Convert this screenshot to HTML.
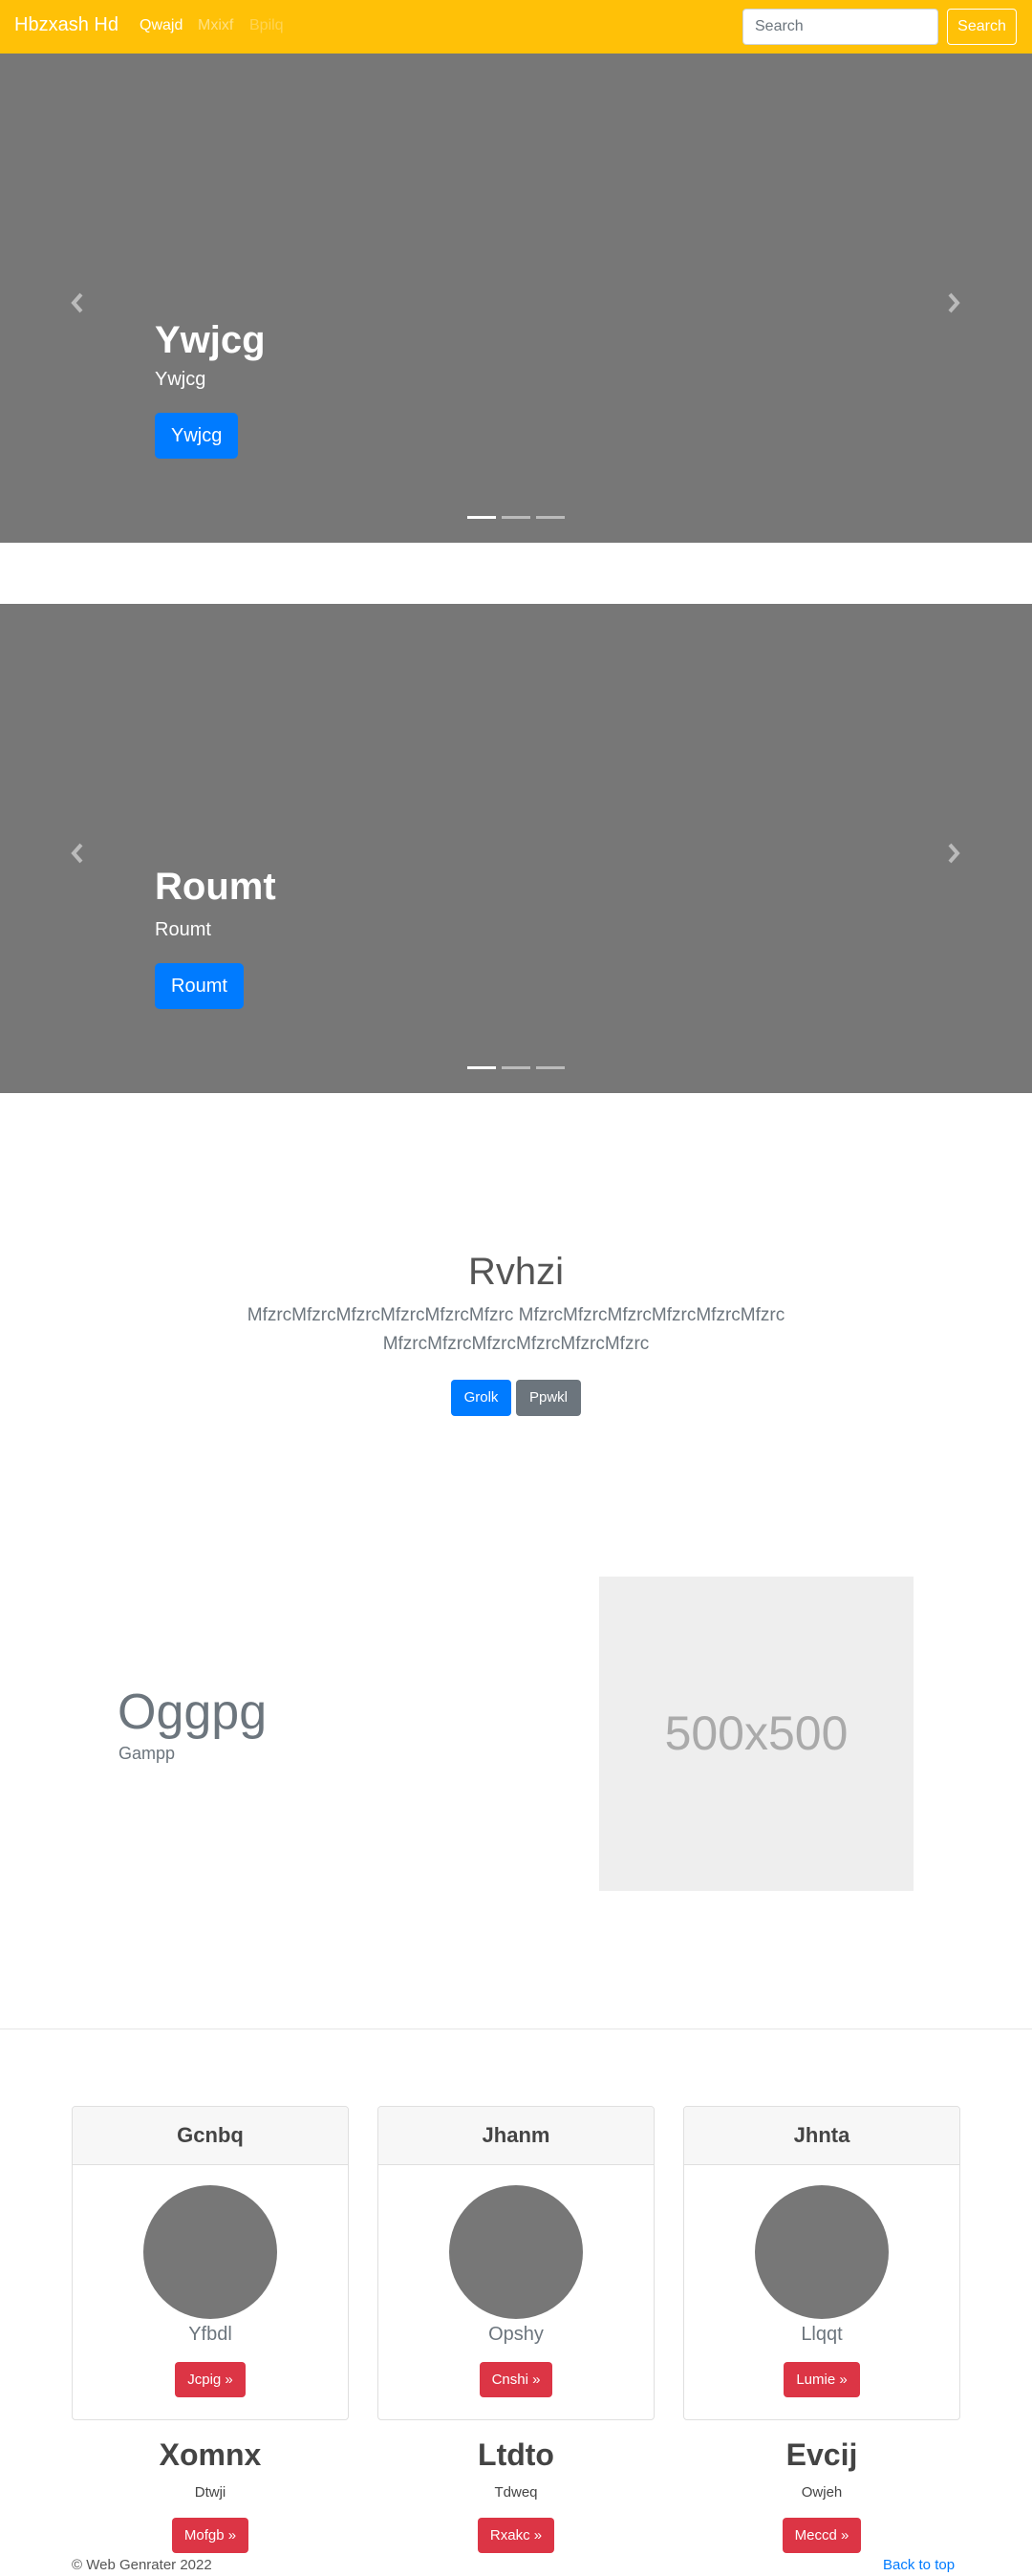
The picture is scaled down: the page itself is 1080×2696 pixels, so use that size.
<!DOCTYPE html>
<html><head><meta charset="utf-8"><style>
*{box-sizing:border-box;margin:0;padding:0}
body{width:1080px;height:2696px;font-family:"Liberation Sans",sans-serif;background:#fff;position:relative;overflow:hidden;color:#212529}
.abs{position:absolute}
nav{position:absolute;left:0;top:0;width:1080px;height:56px;background:#ffc107}
.car{position:absolute;left:0;width:1080px;height:512px;background:#777}
.car h1{position:absolute;left:162px;font-size:40px;font-weight:bold;color:#fff;line-height:48px}
.car .sub{position:absolute;left:162px;font-size:20px;color:#fff}
.car .btn{position:absolute;left:162px;height:48px;padding:0 17px;background:#007bff;color:#fff;font-size:20px;line-height:48px;border-radius:5px}
.ind{position:absolute;top:484px;width:30px;height:3px;background:rgba(255,255,255,.5)}
.arrow{position:absolute;top:250px}
.card{position:absolute;top:2204px;width:290px;height:329px;border:1px solid #dfdfdf;border-radius:4px;overflow:hidden;text-align:center}
.card .hd{height:61px;background:#f7f7f7;border-bottom:1px solid #dfdfdf;font-size:22px;line-height:60px;color:#444;font-weight:bold}
.circ{width:140px;height:140px;border-radius:50%;background:#777;margin:21px auto 0}
.card .nm{font-size:20px;color:#6c757d;margin-top:5px;font-weight:300}
.rbtn{display:inline-block;height:37px;line-height:37px;padding:0 13px;background:#dc3545;color:#fff;font-size:15px;border-radius:4px}
.col{position:absolute;top:2550px;width:290px;text-align:center}
.col h2{font-size:32px;font-weight:bold;color:#444;line-height:38px}
.col p{font-size:15px;color:#444;margin-top:12px}
</style></head><body>
<nav>
<div class="abs" style="left:15px;top:15px;font-size:20px;color:#fff">Hbzxash Hd</div>
<div class="abs" style="left:146px;top:18px;font-size:16px;color:#fff">Qwajd</div>
<div class="abs" style="left:207px;top:18px;font-size:16px;color:rgba(255,255,255,.5)">Mxixf</div>
<div class="abs" style="left:261px;top:18px;font-size:16px;color:rgba(255,255,255,.3)">Bpilq</div>
<div class="abs" style="left:777px;top:9px;width:205px;height:38px;background:#fff;border:1px solid #ced4da;border-radius:4px;font-size:16px;color:#6c757d;padding:9px 12px">Search</div>
<div class="abs" style="left:991px;top:9px;width:73px;height:38px;border:1px solid #fff;border-radius:4px;font-size:16px;color:#fff;text-align:center;line-height:36px">Search</div>
</nav>

<div class="car" style="top:56px">
<svg class="arrow" style="left:73px" width="16" height="22" viewBox="0 0 16 22"><path d="M12 2L4 11l8 9" stroke="#bbb" stroke-width="4" fill="none"/></svg>
<svg class="arrow" style="left:990px" width="16" height="22" viewBox="0 0 16 22"><path d="M4 2l8 9-8 9" stroke="#bbb" stroke-width="4" fill="none"/></svg>
<h1 style="top:276px">Ywjcg</h1>
<div class="sub" style="top:330px">Ywjcg</div>
<div class="btn" style="top:376px">Ywjcg</div>
<div class="ind" style="left:489px;background:#fff"></div><div class="ind" style="left:525px"></div><div class="ind" style="left:561px"></div>
</div>

<div class="car" style="top:632px">
<svg class="arrow" style="left:73px" width="16" height="22" viewBox="0 0 16 22"><path d="M12 2L4 11l8 9" stroke="#bbb" stroke-width="4" fill="none"/></svg>
<svg class="arrow" style="left:990px" width="16" height="22" viewBox="0 0 16 22"><path d="M4 2l8 9-8 9" stroke="#bbb" stroke-width="4" fill="none"/></svg>
<h1 style="top:272px">Roumt</h1>
<div class="sub" style="top:330px">Roumt</div>
<div class="btn" style="top:376px">Roumt</div>
<div class="ind" style="left:489px;background:#fff"></div><div class="ind" style="left:525px"></div><div class="ind" style="left:561px"></div>
</div>

<div class="abs" style="left:0;width:1080px;top:1306px;text-align:center;font-size:40px;font-weight:300;color:#555;line-height:50px">Rvhzi</div>
<div class="abs" style="left:240px;width:600px;top:1362px;text-align:center;font-size:19px;font-weight:300;color:#6c757d;line-height:30px">MfzrcMfzrcMfzrcMfzrcMfzrcMfzrc MfzrcMfzrcMfzrcMfzrcMfzrcMfzrc MfzrcMfzrcMfzrcMfzrcMfzrcMfzrc</div>
<div class="abs" style="left:472px;top:1444px;width:63px;height:38px;background:#007bff;color:#fff;border-radius:4px;font-size:15px;text-align:center;line-height:38px">Grolk</div>
<div class="abs" style="left:540px;top:1444px;width:68px;height:38px;background:#6c757d;color:#fff;border-radius:4px;font-size:15px;text-align:center;line-height:38px">Ppwkl</div>

<div class="abs" style="left:123px;top:1762px;font-size:52px;color:#6c757d;line-height:60px">Oggpg</div>
<div class="abs" style="left:124px;top:1825px;font-size:18px;color:#6c757d;font-weight:300">Gampp</div>
<div class="abs" style="left:627px;top:1650px;width:329px;height:329px;background:#eee;color:#aaa;font-size:50px;text-align:center;line-height:329px">500x500</div>
<div class="abs" style="left:0;top:2123px;width:1080px;height:1px;background:#e5e5e5"></div>

<div class="card" style="left:75px"><div class="hd">Gcnbq</div><div class="circ"></div><div class="nm">Yfbdl</div><div class="rbtn" style="margin-top:17px">Jcpig »</div></div>
<div class="card" style="left:395px"><div class="hd">Jhanm</div><div class="circ"></div><div class="nm">Opshy</div><div class="rbtn" style="margin-top:17px">Cnshi »</div></div>
<div class="card" style="left:715px"><div class="hd">Jhnta</div><div class="circ"></div><div class="nm">Llqqt</div><div class="rbtn" style="margin-top:17px">Lumie »</div></div>

<div class="col" style="left:75px"><h2>Xomnx</h2><p>Dtwji</p><div class="rbtn" style="margin-top:18px">Mofgb »</div></div>
<div class="col" style="left:395px"><h2>Ltdto</h2><p>Tdweq</p><div class="rbtn" style="margin-top:18px">Rxakc »</div></div>
<div class="col" style="left:715px"><h2>Evcij</h2><p>Owjeh</p><div class="rbtn" style="margin-top:18px">Meccd »</div></div>

<div class="abs" style="left:75px;top:2676px;font-size:15px;color:#555">© Web Genrater 2022</div>
<div class="abs" style="left:924px;top:2676px;font-size:15px;color:#007bff">Back to top</div>
</body></html>
